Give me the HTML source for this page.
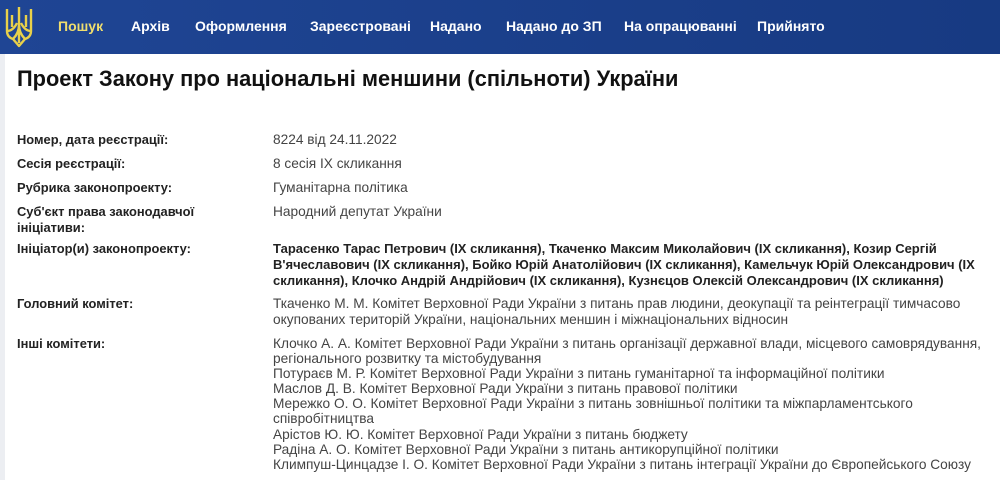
<!DOCTYPE html>
<html><head><meta charset="utf-8"><style>
*{margin:0;padding:0;box-sizing:border-box}
body{width:1000px;height:480px;overflow:hidden;background:#fff;font-family:"Liberation Sans",sans-serif;position:relative}
.nav{position:absolute;left:0;top:0;width:1000px;height:54px;background:linear-gradient(90deg,#1f4594,#173a82)}
.nav span{position:absolute;top:18px;font-size:14px;font-weight:bold;color:#fff;white-space:nowrap}
.side{position:absolute;left:0;top:54px;width:5px;height:426px;background:#eceef2}
h1{position:absolute;left:17px;top:66px;font-size:21.8px;font-weight:bold;color:#111;white-space:nowrap}
.l{position:absolute;left:17px;font-size:12.9px;font-weight:bold;color:#222;white-space:nowrap;line-height:16px}
.v{position:absolute;left:273px;font-size:13.7px;color:#444;white-space:nowrap;line-height:16px}
.b{font-weight:bold;color:#222;font-size:13px}
</style></head><body>
<div class="nav">
<svg style="position:absolute;left:3px;top:5px" width="32" height="44" viewBox="0 0 32 44"><g fill="none" stroke="#e8d04a" stroke-width="2.4" stroke-linejoin="round"><path d="M16 2v30M4 4v22q0 6 6 8l6 7 6-7q6-2 6-8V4M4 26q6 0 10-8M28 26q-6 0-10-8M10 34q6-6 6-14q0 8 6 14M9 10v12M23 10v12M16 32v6"/></g></svg>
<span style="left:58px;color:#f0de6e">Пошук</span>
<span style="left:131px">Архів</span>
<span style="left:195px">Оформлення</span>
<span style="left:310px">Зареєстровані</span>
<span style="left:430px">Надано</span>
<span style="left:506px">Надано до ЗП</span>
<span style="left:624px">На опрацюванні</span>
<span style="left:757px">Прийнято</span>
</div>
<div class="side"></div>
<h1>Проект Закону про національні меншини (спільноти) України</h1>
<div class="l" style="top:132px">Номер, дата реєстрації:</div>
<div class="v" style="top:132px">8224 від 24.11.2022</div>
<div class="l" style="top:156px">Сесія реєстрації:</div>
<div class="v" style="top:156px">8 сесія IX скликання</div>
<div class="l" style="top:180px">Рубрика законопроекту:</div>
<div class="v" style="top:180px">Гуманітарна політика</div>
<div class="l" style="top:204px">Суб'єкт права законодавчої<br>ініціативи:</div>
<div class="v" style="top:204px">Народний депутат України</div>
<div class="l" style="top:241px">Ініціатор(и) законопроекту:</div>
<div class="v b" style="top:241px">Тарасенко Тарас Петрович (IX скликання), Ткаченко Максим Миколайович (IX скликання), Козир Сергій<br>В'ячеславович (IX скликання), Бойко Юрій Анатолійович (IX скликання), Камельчук Юрій Олександрович (IX<br>скликання), Клочко Андрій Андрійович (IX скликання), Кузнєцов Олексій Олександрович (IX скликання)</div>
<div class="l" style="top:296px">Головний комітет:</div>
<div class="v" style="top:296px">Ткаченко М. М. Комітет Верховної Ради України з питань прав людини, деокупації та реінтеграції тимчасово<br>окупованих територій України, національних меншин і міжнаціональних відносин</div>
<div class="l" style="top:336px">Інші комітети:</div>
<div class="v" style="top:336px;line-height:15.1px">Клочко А. А. Комітет Верховної Ради України з питань організації державної влади, місцевого самоврядування,<br>регіонального розвитку та містобудування<br>Потураєв М. Р. Комітет Верховної Ради України з питань гуманітарної та інформаційної політики<br>Маслов Д. В. Комітет Верховної Ради України з питань правової політики<br>Мережко О. О. Комітет Верховної Ради України з питань зовнішньої політики та міжпарламентського<br>співробітництва<br>Арістов Ю. Ю. Комітет Верховної Ради України з питань бюджету<br>Радіна А. О. Комітет Верховної Ради України з питань антикорупційної політики<br>Климпуш-Цинцадзе І. О. Комітет Верховної Ради України з питань інтеграції України до Європейського Союзу</div>
</body></html>
